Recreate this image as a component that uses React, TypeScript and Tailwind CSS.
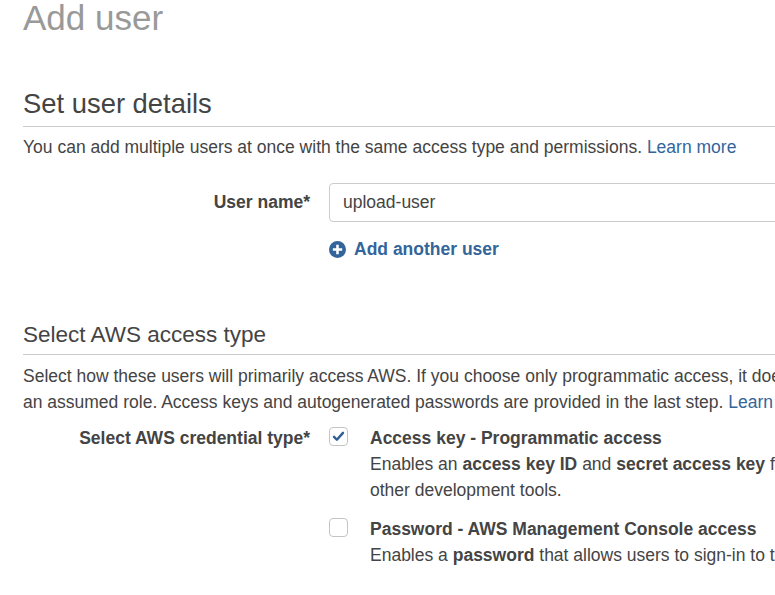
import React from 'react';

function Checkbox({ checked }: { checked: boolean }) {
  return (
    <span className="mt-[2px] flex h-[19px] w-[19px] shrink-0 items-center justify-center rounded-[4px] border border-[#c4c4c4] bg-white">
      {checked && (
        <svg viewBox="0 0 16 16" className="h-[13px] w-[13px]" aria-hidden="true">
          <path d="M2.5 8.5 L6 12 L13.5 3.5" fill="none" stroke="#2f5f97" strokeWidth="3" strokeLinecap="round" strokeLinejoin="round" />
        </svg>
      )}
    </span>
  );
}

export default function App() {
  return (
    <div
      className="h-[595px] w-[775px] overflow-hidden bg-white text-[#444]"
      style={{ fontFamily: '"Liberation Sans", Arial, sans-serif' }}
    >
      <div className="w-[1200px] pl-[23px]">
        <h1 className="text-[35px] leading-[35px] text-[#999]">Add user</h1>

        {/* Set user details */}
        <h2 className="mt-[53px] border-b border-[#ccc] pb-[7px] text-[27.4px] leading-[31px]">
          Set user details
        </h2>
        <p className="mt-[7px] text-[17.5px] leading-[26px]">
          You can add multiple users at once with the same access type and permissions.{' '}
          <a className="text-[#33659b]">Learn more</a>
        </p>

        <div className="mt-[23px] flex items-center">
          <label className="w-[287px] text-right text-[17.5px] font-bold">User name*</label>
          <div className="ml-[19px] flex h-[39px] w-[600px] items-center rounded-[4px] border border-[#ccc] px-[13px] text-[17.5px] text-[#444]">
            upload-user
          </div>
        </div>
        <div className="mt-[14px] flex items-center pl-[306px] text-[17.5px] font-bold leading-[26px] text-[#33659b]">
          <svg viewBox="0 0 20 20" className="mr-[8px] h-[17px] w-[17px]" aria-hidden="true">
            <circle cx="10" cy="10" r="10" fill="#33659b" />
            <path d="M10 4.5 V15.5 M4.5 10 H15.5" stroke="#fff" strokeWidth="3" />
          </svg>
          Add another user
        </div>

        {/* Select AWS access type */}
        <h2 className="mt-[60px] border-b border-[#ccc] pb-[6px] text-[22.5px] leading-[26px]">
          Select AWS access type
        </h2>
        <p className="mt-[8px] whitespace-nowrap text-[17.5px] leading-[26px]">
          Select how these users will primarily access AWS. If you choose only programmatic access, it does NOT prevent users from accessing the console using
          <br />
          an assumed role. Access keys and autogenerated passwords are provided in the last step.{' '}
          <a className="text-[#33659b]">Learn more</a>
        </p>

        <div className="mt-[10px] flex">
          <div className="w-[287px] text-right text-[17.5px] font-bold leading-[26px]">
            Select AWS credential type*
          </div>
          <div className="ml-[19px] flex flex-col">
            <div className="flex">
              <Checkbox checked />
              <div className="ml-[22px] whitespace-nowrap text-[17.5px] leading-[26px]">
                <div className="font-bold">Access key - Programmatic access</div>
                <div>
                  Enables an <b>access key ID</b> and <b>secret access key</b> for the AWS API, CLI, SDK, and
                </div>
                <div>other development tools.</div>
              </div>
            </div>
            <div className="mt-[13px] flex">
              <Checkbox checked={false} />
              <div className="ml-[22px] whitespace-nowrap text-[17.5px] leading-[26px]">
                <div className="font-bold">Password - AWS Management Console access</div>
                <div>
                  Enables a <b>password</b> that allows users to sign-in to the AWS Management Console.
                </div>
              </div>
            </div>
          </div>
        </div>
      </div>
    </div>
  );
}
